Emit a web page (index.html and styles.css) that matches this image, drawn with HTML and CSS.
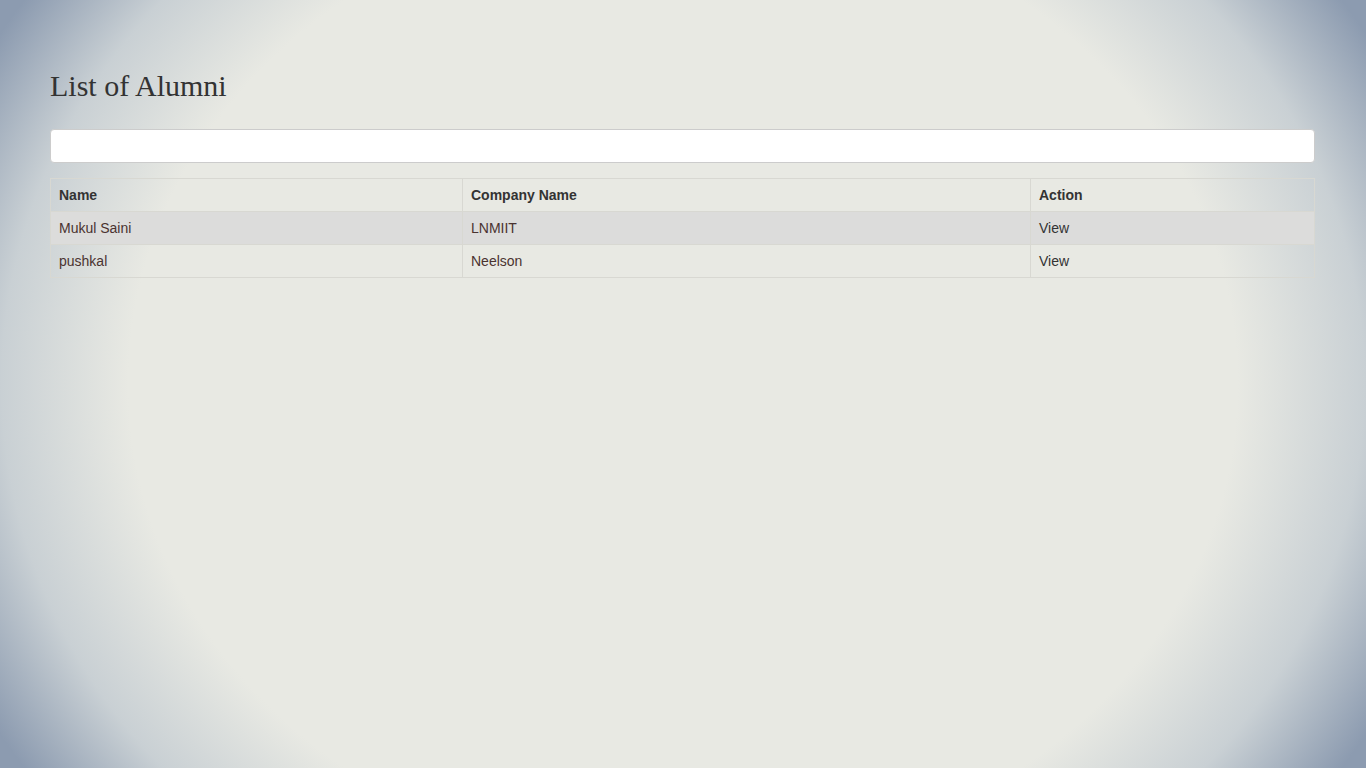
FILE: index.html
```html
<!DOCTYPE html>
<html lang="en">
<head>
    <meta charset="UTF-8">
    <title>List of Alumni</title>
    <link rel="stylesheet" href="styles.css">
</head>
<body>
    <div class="container">
        <h1 class="page-title">List of Alumni</h1>
        <input type="text" class="search-input">
        <table class="alumni-table">
            <thead>
                <tr>
                    <th class="col-name">Name</th>
                    <th class="col-company">Company Name</th>
                    <th>Action</th>
                </tr>
            </thead>
            <tbody>
                <tr>
                    <td>Mukul Saini</td>
                    <td>LNMIIT</td>
                    <td><a href="#" class="view-link">View</a></td>
                </tr>
                <tr>
                    <td>pushkal</td>
                    <td>Neelson</td>
                    <td><a href="#" class="view-link">View</a></td>
                </tr>
            </tbody>
        </table>
    </div>
</body>
</html>
```

FILE: styles.css
```css
* {
    margin: 0;
    padding: 0;
    box-sizing: border-box;
}

html, body {
    height: 100%;
}

body {
    font-family: 'Liberation Sans', Arial, sans-serif;
    font-size: 14px;
    color: #333;
    background: radial-gradient(ellipse 58% 90% at 50% 50%, #e8e9e3 0%, #e8e9e3 70%, #c9d0d4 86%, #8c9bb0 100%);
    background-color: #e8e9e3;
}

.container {
    padding: 66px 51px 0 50px;
}

.page-title {
    font-family: 'Liberation Serif', 'Times New Roman', serif;
    font-weight: normal;
    font-size: 30px;
    line-height: 40px;
    color: #333;
    margin-bottom: 23px;
}

.search-input {
    display: block;
    width: 100%;
    height: 34px;
    background: #fff;
    border: 1px solid #ccc;
    border-radius: 4px;
    margin-bottom: 15px;
}

.alumni-table {
    width: 100%;
    border-collapse: collapse;
    border: 1px solid #d8d8d2;
}

.alumni-table th,
.alumni-table td {
    text-align: left;
    padding: 0 8px;
    height: 33px;
    border-left: 1px solid #d8d8d2;
    vertical-align: middle;
}

.alumni-table th {
    font-weight: bold;
    color: #333;
}

.col-name {
    width: 412px;
}

.col-company {
    width: 568px;
}

.alumni-table td {
    color: #4a3330;
    border-top: 1px solid #d8d8d2;
}

.alumni-table tbody tr:nth-child(odd) {
    background: #dcdcdb;
}

.view-link {
    color: #333;
    text-decoration: none;
}
```
